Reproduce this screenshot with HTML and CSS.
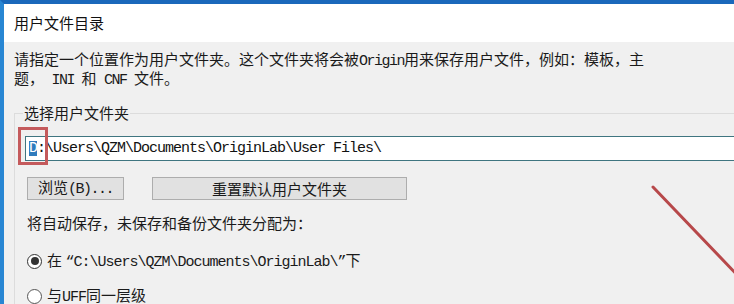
FILE: index.html
```html
<!DOCTYPE html>
<html lang="zh-CN">
<head>
    <meta charset="UTF-8">
    <meta name="viewport" content="width=device-width, initial-scale=1.0">
    <title>用户文件目录</title>
    <link rel="stylesheet" href="styles.css">
</head>
<body>
    <div class="window">
        <div class="window-title">用户文件目录</div>
        <div class="window-body">
            <p class="intro">请指定一个位置作为用户文件夹。这个文件夹将会被<span class="en">Origin</span>用来保存用户文件，例如：模板，主<br>题，<span class="en"> INI </span>和<span class="en"> CNF </span>文件。</p>

            <fieldset class="group">
                <legend class="group-label">选择用户文件夹</legend>

                <div class="path-field">
                    <div class="path-box"><span class="path-sel">D</span>:\Users\QZM\Documents\OriginLab\User Files\</div>
                    <div class="mark-box"></div>
                </div>

                <div class="group-buttons">
                    <button class="btn btn-browse">浏览<span class="en">(B)...</span></button>
                    <button class="btn btn-reset">重置默认用户文件夹</button>
                </div>

                <div class="assign-label">将自动保存，未保存和备份文件夹分配为：</div>

                <label class="radio-row radio-first">
                    <span class="radio checked"></span>
                    <span>在 <span class="en path">“C:\Users\QZM\Documents\OriginLab\”</span>下</span>
                </label>
                <label class="radio-row radio-second">
                    <span class="radio"></span>
                    <span>与<span class="en path">UFF</span>同一层级</span>
                </label>
            </fieldset>
        </div>

        <svg class="mark-arrow" width="100" height="110" viewBox="0 0 100 110">
            <line x1="2" y1="2" x2="92" y2="96" stroke="#b7484a" stroke-width="3" stroke-linecap="round"/>
        </svg>
    </div>
</body>
</html>
```

FILE: styles.css
```css
*, *:before, *:after {
    box-sizing: border-box;
}

html, body {
    margin: 0;
    height: 100%;
    overflow: hidden;
}

body {
    font-family: "Noto Sans CJK SC", "Liberation Sans", sans-serif;
    font-size: 15px;
    color: #1a1a1a;
    background: #f0f0f0;
}

.window {
    position: relative;
    width: 760px;
    height: 304px;
    overflow: hidden;
    display: flex;
    flex-direction: column;
    border-top: 4px solid #1a68bb;
    border-left: 4px solid #2886d3;
}

.window-title {
    flex-shrink: 0;
    height: 38px;
    display: flex;
    align-items: center;
    padding-left: 10px;
    background: #fff;
    color: #111;
    line-height: 16px;
}

.window-body {
    flex: 1;
    padding: 9px 0 0 10px;
    background: #f0f0f0;
}

.en {
    font-family: "Liberation Mono", monospace;
    letter-spacing: -1.5px;
}

.en.path {
    letter-spacing: -1px;
}

.intro {
    margin: 0;
    line-height: 16px;
    white-space: nowrap;
}

.group {
    margin: 16px 0 0 0;
    padding: 0 0 40px 12px;
    border: 1px solid #dcdcdc;
    border-right: none;
    border-bottom: none;
}

.group-label {
    margin-left: -4px;
    padding: 0 1px;
    line-height: 16px;
}

.path-field {
    position: relative;
    margin: 15px 0 0 -2px;
}

.path-box {
    height: 25px;
    padding: 0 0 0 3px;
    display: flex;
    align-items: center;
    background: #fff;
    border: 1px solid #3f7580;
    font-family: "Liberation Mono", monospace;
    font-size: 15px;
    letter-spacing: -1px;
    white-space: nowrap;
    color: #111;
}

.path-sel {
    background: #2f7bbd;
    color: #fff;
    line-height: 15px;
}

.mark-box {
    position: absolute;
    left: -7px;
    top: -9px;
    width: 30px;
    height: 38px;
    border: 3px solid #c45a5c;
}

.group-buttons {
    display: flex;
    gap: 28px;
    margin-top: 16px;
}

.btn {
    height: 23px;
    padding: 0;
    font-family: inherit;
    font-size: 15px;
    color: #1a1a1a;
    background: #e1e1e1;
    border: 1px solid #adadad;
    border-radius: 0;
    line-height: 16px;
}

.btn-browse {
    width: 97px;
}

.btn-reset {
    width: 255px;
}

.assign-label {
    margin-top: 15px;
    line-height: 16px;
}

.radio-row {
    display: flex;
    align-items: center;
    gap: 5px;
    height: 20px;
    line-height: 16px;
    white-space: nowrap;
}

.radio-first {
    margin-top: 20px;
}

.radio-second {
    margin-top: 15px;
}

.radio {
    width: 15px;
    height: 15px;
    border-radius: 50%;
    border: 1px solid #555;
    background: #fff;
    display: flex;
    align-items: center;
    justify-content: center;
}

.radio.checked {
    border-color: #333;
}

.radio.checked:after {
    content: "";
    width: 8px;
    height: 8px;
    border-radius: 50%;
    background: #333;
}

.mark-arrow {
    position: absolute;
    left: 647px;
    top: 181px;
}
```
